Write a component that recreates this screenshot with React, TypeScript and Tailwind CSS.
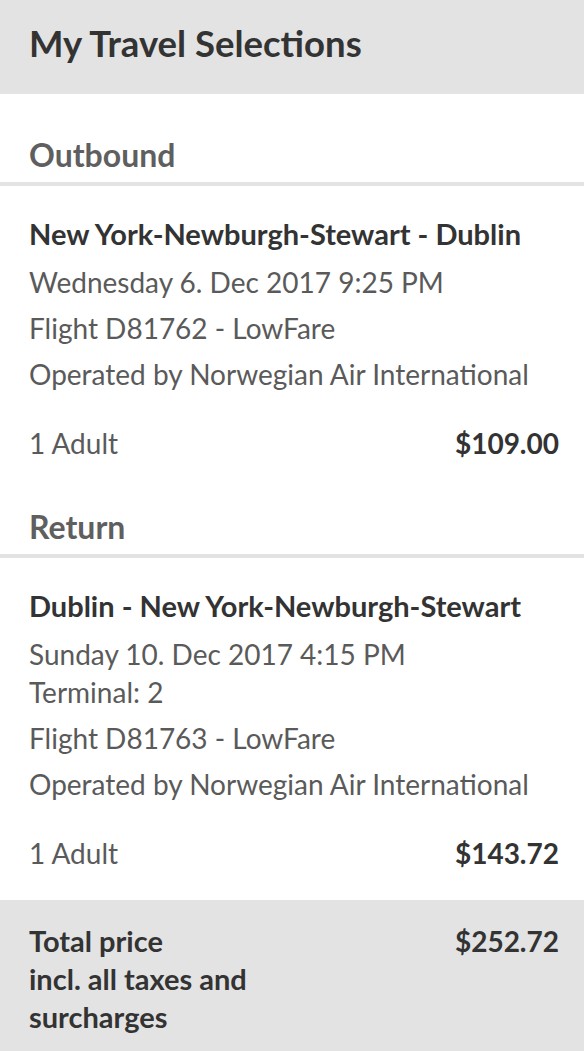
const segments = [
  {
    label: "Outbound",
    route: "New York-Newburgh-Stewart - Dublin",
    when: ["Wednesday 6. Dec 2017 9:25 PM"],
    flight: "Flight D81762 - LowFare",
    operator: "Operated by Norwegian Air International",
    pax: "1 Adult",
    price: "$109.00",
  },
  {
    label: "Return",
    route: "Dublin - New York-Newburgh-Stewart",
    when: ["Sunday 10. Dec 2017 4:15 PM", "Terminal: 2"],
    flight: "Flight D81763 - LowFare",
    operator: "Operated by Norwegian Air International",
    pax: "1 Adult",
    price: "$143.72",
  },
];

export default function App() {
  return (
    <div className="w-[584px] bg-white font-['Lato',sans-serif] text-[#333]">
      <header className="h-[94px] bg-[#e3e3e3] px-[29px] pt-[24px]">
        <h1 className="text-[36.5px] font-bold leading-[38px]">My Travel Selections</h1>
      </header>

      {segments.map((s, i) => (
        <section key={s.label}>
          <h2
            className={
              "border-b-4 border-[#e3e3e3] px-[29px] pb-[8px] text-[32px] font-bold leading-[38px] text-[#5f5f5f] " +
              (i === 0 ? "pt-[42px]" : "pt-[18px]")
            }
          >
            {s.label}
          </h2>
          <div className="pb-[28px] pl-[29px] pr-[25px] pt-[29px]">
            <p className="mb-[10px] text-[29px] font-bold leading-[38px]">{s.route}</p>
            <p className="mb-2 text-[28px] leading-[38px] text-[#5a5a5a]">
              {s.when.map((w, j) => (
                <span key={j} className="block">
                  {w}
                </span>
              ))}
            </p>
            <p className="mb-2 text-[28px] leading-[38px] text-[#5a5a5a]">{s.flight}</p>
            <p className="text-[28px] leading-[38px] text-[#5a5a5a]">{s.operator}</p>
            <div className="mt-[31px] flex items-baseline justify-between text-[28px] leading-[38px]">
              <span className="text-[#5a5a5a]">{s.pax}</span>
              <span className="font-bold">{s.price}</span>
            </div>
          </div>
        </section>
      ))}

      <footer className="flex justify-between bg-[#e3e3e3] pb-[15px] pl-[29px] pr-[25px] pt-[22px] font-bold leading-[38px]">
        <p className="text-[29px]">
          Total price
          <br />
          incl. all taxes and
          <br />
          surcharges
        </p>
        <p className="text-[28px]">$252.72</p>
      </footer>
    </div>
  );
}
